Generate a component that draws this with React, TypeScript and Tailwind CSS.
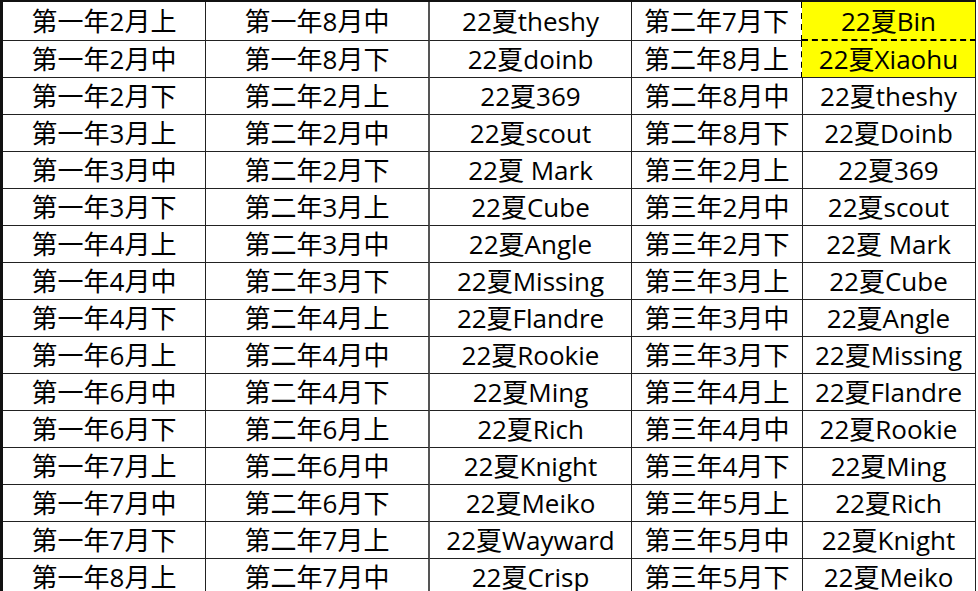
import React from "react";

const rows: string[][] = [
  ["第一年2月上", "第一年8月中", "22夏theshy", "第二年7月下", "22夏Bin"],
  ["第一年2月中", "第一年8月下", "22夏doinb", "第二年8月上", "22夏Xiaohu"],
  ["第一年2月下", "第二年2月上", "22夏369", "第二年8月中", "22夏theshy"],
  ["第一年3月上", "第二年2月中", "22夏scout", "第二年8月下", "22夏Doinb"],
  ["第一年3月中", "第二年2月下", "22夏 Mark", "第三年2月上", "22夏369"],
  ["第一年3月下", "第二年3月上", "22夏Cube", "第三年2月中", "22夏scout"],
  ["第一年4月上", "第二年3月中", "22夏Angle", "第三年2月下", "22夏 Mark"],
  ["第一年4月中", "第二年3月下", "22夏Missing", "第三年3月上", "22夏Cube"],
  ["第一年4月下", "第二年4月上", "22夏Flandre", "第三年3月中", "22夏Angle"],
  ["第一年6月上", "第二年4月中", "22夏Rookie", "第三年3月下", "22夏Missing"],
  ["第一年6月中", "第二年4月下", "22夏Ming", "第三年4月上", "22夏Flandre"],
  ["第一年6月下", "第二年6月上", "22夏Rich", "第三年4月中", "22夏Rookie"],
  ["第一年7月上", "第二年6月中", "22夏Knight", "第三年4月下", "22夏Ming"],
  ["第一年7月中", "第二年6月下", "22夏Meiko", "第三年5月上", "22夏Rich"],
  ["第一年7月下", "第二年7月上", "22夏Wayward", "第三年5月中", "22夏Knight"],
  ["第一年8月上", "第二年7月中", "22夏Crisp", "第三年5月下", "22夏Meiko"],
];

const cell = "flex h-full shrink-0 items-center justify-center border-b border-[#222] whitespace-nowrap";

const App = () => {
  return (
    <div
      className="h-[591px] w-[978px] overflow-hidden bg-white text-[26px] leading-none text-black"
      style={{ fontFamily: '"Open Sans", "Noto Sans CJK SC", sans-serif' }}
    >
      <div className="w-[976px] border-t-2 border-l-[3px] border-[#111]">
        {rows.map((r, i) => {
          const hi = i < 2;
          return (
            <div key={i} className={`flex ${i === 0 ? "h-[39px]" : "h-[37px]"}`}>
              <div className={`${cell} w-[203px] border-r border-r-[#222]`}>{r[0]}</div>
              <div className={`${cell} w-[224px] border-r-2 border-r-[#555]`}>{r[1]}</div>
              <div className={`${cell} w-[202px] border-r border-r-[#222]`}>{r[2]}</div>
              <div
                className={`${cell} w-[171px] ${
                  hi ? "border-r-2 border-r-black border-dashed" : "border-r border-r-[#222]"
                }`}
                style={hi ? { borderBottomStyle: "solid" } : undefined}
              >
                {r[3]}
              </div>
              <div
                className={`${cell} -ml-px w-[174px] border-r border-r-[#222] ${
                  hi ? "bg-[#ffff00]" : ""
                } ${i === 0 ? "border-b-2 border-b-black border-dashed" : ""}`}
                style={i === 0 ? { borderRightStyle: "solid" } : undefined}
              >
                {r[4]}
              </div>
            </div>
          );
        })}
      </div>
    </div>
  );
};

export default App;
